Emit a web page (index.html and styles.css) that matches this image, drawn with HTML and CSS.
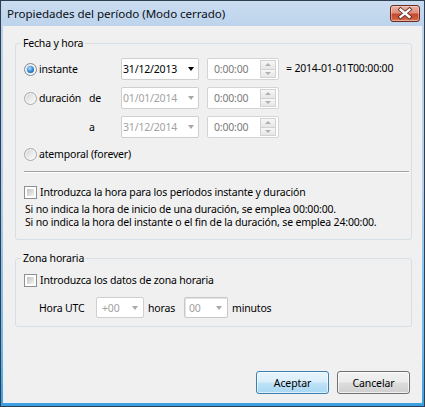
FILE: index.html
```html
<!DOCTYPE html>
<html lang="es">
<head>
<meta charset="utf-8">
<title>Propiedades del período</title>
<link rel="stylesheet" href="styles.css">
</head>
<body>
<div class="window">
  <div class="titlebar">
    <span class="title">Propiedades del período (Modo cerrado)</span>
    <span class="close">
      <svg width="28" height="15" viewBox="0 0 28 15">
        <path d="M9.5 3.5 L18.5 11 M18.5 3.5 L9.5 11" stroke="#5a2a22" stroke-width="4" stroke-linecap="square" fill="none"/>
        <path d="M9.5 3.5 L18.5 11 M18.5 3.5 L9.5 11" stroke="#ffffff" stroke-width="2.3" stroke-linecap="square" fill="none"/>
      </svg>
    </span>
  </div>
  <div class="client">
    <fieldset class="group g1">
      <legend>Fecha y hora</legend>
      <div class="grid">
        <label class="opt"><span class="radio checked"></span>instante</label>
        <span class="cell"></span>
        <div class="combo"><span>31/12/2013</span><i class="arrow"></i></div>
        <div class="spin"><span>0:00:00</span><span class="spinbtns"><b class="up"></b><b class="down"></b></span></div>
        <span class="iso">= 2014-01-01T00:00:00</span>

        <label class="opt"><span class="radio"></span>duración</label>
        <span class="cell">de</span>
        <div class="combo disabled"><span>01/01/2014</span><i class="arrow"></i></div>
        <div class="spin"><span>0:00:00</span><span class="spinbtns"><b class="up"></b><b class="down"></b></span></div>
        <span class="cell"></span>

        <span class="cell"></span>
        <span class="cell">a</span>
        <div class="combo disabled"><span>31/12/2014</span><i class="arrow"></i></div>
        <div class="spin"><span>0:00:00</span><span class="spinbtns"><b class="up"></b><b class="down"></b></span></div>
        <span class="cell"></span>
      </div>
      <label class="opt atemp"><span class="radio"></span>atemporal (forever)</label>
      <div class="sep"></div>
      <label class="chk"><span class="checkbox"></span>Introduzca la hora para los períodos instante y duración</label>
      <p class="note">Si no indica la hora de inicio de una duración, se emplea 00:00:00.<br>Si no indica la hora del instante o el fin de la duración, se emplea 24:00:00.</p>
    </fieldset>
    <fieldset class="group g2">
      <legend>Zona horaria</legend>
      <label class="chk"><span class="checkbox"></span>Introduzca los datos de zona horaria</label>
      <div class="utc">
        <span class="utc-label">Hora UTC</span>
        <div class="combo disabled small w48"><span>+00</span><i class="arrow"></i></div>
        <span class="utc-horas">horas</span>
        <div class="combo disabled small w44 inset"><span>00</span><i class="arrow"></i></div>
        <span class="utc-min">minutos</span>
      </div>
    </fieldset>
    <div class="buttons">
      <button class="btn default">Aceptar</button>
      <button class="btn">Cancelar</button>
    </div>
  </div>
</div>
</body>
</html>
```
FILE: styles.css
```css
html, body {
  margin: 0;
  padding: 0;
  background: #ffffff;
}
body {
  font-family: "Noto Sans", "Open Sans", sans-serif;
  font-size: 10.5px;
  letter-spacing: -0.18px;
  color: #000;
}
.window {
  width: 425px;
  height: 407px;
  box-sizing: border-box;
  border: 1px solid #2e3f52;
  background: linear-gradient(to bottom, #c6d9ee 0px, #bcd3ec 26px, #b0d0ee 45%, #6cb7ea 85%, #3ba0e3 100%);
  padding: 0 2px 3px 2px;
  display: flex;
  flex-direction: column;
}
.titlebar {
  height: 25px;
  flex: none;
  display: flex;
  align-items: flex-start;
  padding-left: 4px;
  padding-right: 2px;
  background: linear-gradient(to bottom, #cadcf0, #bdd4ec);
}
.title {
  font-size: 11.6px;
  letter-spacing: -0.05px;
  line-height: 15px;
  margin-top: 5px;
  color: #0b0f15;
}
.close {
  margin-left: auto;
  margin-top: 4px;
  width: 30px;
  height: 17px;
  box-sizing: border-box;
  border: 1px solid #6b2b20;
  border-radius: 3px;
  background: linear-gradient(to bottom, #eab0a2 0%, #dd8f7c 45%, #c8492f 55%, #cf5b3f 85%, #e08566 100%);
  box-shadow: inset 0 0 0 1px rgba(255,255,255,0.35);
  display: flex;
  align-items: center;
  justify-content: center;
}
.close svg { display: block; }
.client {
  flex: 1;
  background: #f0f0f0;
  display: flex;
  flex-direction: column;
  padding-top: 10px;
}
.group {
  margin: 0 10px 0 12px;
  width: 397px;
  box-sizing: border-box;
  border: 1px solid #d5dfe5;
  border-radius: 3px;
  padding: 8px 2px 10px 8px;
  min-width: 0;
}
.group legend {
  padding: 0 2px;
  margin-left: -3px;
  line-height: 14px;
  height: 14px;
}
.g2 {
  margin-top: 11px;
  padding-bottom: 8px;
}
.grid {
  display: grid;
  grid-template-columns: 65px 32px 86px 79px auto;
  grid-auto-rows: 22px;
  row-gap: 7px;
  align-items: center;
}
.cell {
  line-height: 14px;
}
.opt, .chk {
  display: flex;
  align-items: center;
  line-height: 15px;
  height: 15px;
}
.radio {
  width: 13px;
  height: 13px;
  box-sizing: border-box;
  border-radius: 50%;
  border: 1px solid #a6a8ab;
  background: linear-gradient(135deg, #cfd1d3 0%, #ececec 55%, #fafafa 100%);
  box-shadow: inset 0 0 0 1px #f6f6f6;
  margin-right: 2px;
  flex: none;
  display: flex;
  align-items: center;
  justify-content: center;
}
.radio.checked {
  border-color: #7a8a9a;
}
.radio.checked::after {
  content: "";
  width: 7px;
  height: 7px;
  border-radius: 50%;
  background: radial-gradient(circle at 40% 35%, #b7e2ff 0%, #3c93dc 45%, #123f78 100%);
}
.checkbox {
  width: 13px;
  height: 13px;
  box-sizing: border-box;
  border: 1px solid #8e8f8f;
  padding: 2px;
  background: linear-gradient(135deg, #c0c4c8, #f2f2f2) content-box, #fff;
  margin-right: 3px;
  flex: none;
}
.combo {
  width: 78px;
  height: 22px;
  box-sizing: border-box;
  border: 1px solid #cfcfcf;
  border-radius: 2px;
  background: #fff;
  display: flex;
  align-items: center;
  padding: 0 4px 0 1px;
  line-height: 14px;
}
.combo span { flex: 1; }
.arrow {
  width: 0;
  height: 0;
  border-left: 3.5px solid transparent;
  border-right: 3.5px solid transparent;
  border-top: 4px solid #000;
}
.combo.disabled span { color: #a2a2a2; }
.combo.disabled .arrow { border-top-color: #a8a8a8; }
.spin {
  width: 72px;
  height: 22px;
  box-sizing: border-box;
  border: 1px solid #d4d4d4;
  border-radius: 2px;
  background: #fff;
  display: flex;
  align-items: center;
  padding: 0 2px 0 6px;
  color: #7a7a7a;
  line-height: 14px;
}
.spin > span:first-child { flex: 1; }
.spinbtns {
  width: 16px;
  height: 18px;
  display: flex;
  flex-direction: column;
}
.spinbtns b {
  flex: 1;
  box-sizing: border-box;
  border: 1px solid #d2d2d2;
  background: linear-gradient(to bottom, #f7f7f7, #e6e6e6);
  display: flex;
  align-items: center;
  justify-content: center;
}
.spinbtns b + b { border-top: none; }
.spinbtns b::after {
  content: "";
  width: 0;
  height: 0;
  border-left: 3px solid transparent;
  border-right: 3px solid transparent;
}
.spinbtns .up::after { border-bottom: 3px solid #b0b0b0; }
.spinbtns .down::after { border-top: 3px solid #b0b0b0; }
.iso {
  line-height: 14px;
  margin-top: -2px;
}
.atemp {
  margin-top: 8px;
  height: 16px;
}
.sep {
  margin-top: 9px;
  border-top: 1px solid #a0a0a0;
  border-bottom: 1px solid #ffffff;
}
.g1 .chk {
  margin-top: 12px;
}
.note {
  margin: 3px 0 0 1px;
  line-height: 13px;
}
.utc {
  margin-top: 9px;
  height: 21px;
  display: flex;
  align-items: center;
  padding-left: 15px;
}
.utc-label { width: 57px; }
.utc-horas { width: 36px; margin-left: 4px; }
.utc-min { margin-left: 4px; }
.combo.small { height: 21px; }
.combo.w48 { width: 48px; padding-left: 5px; padding-right: 5px; }
.combo.w44 { width: 44px; padding-left: 4px; padding-right: 5px; }
.combo.inset { border-color: #c8c8c8; box-shadow: inset 1px 1px 0 #e4e4e4; }
.buttons {
  margin-top: auto;
  margin-bottom: 9px;
  display: flex;
  justify-content: flex-end;
  gap: 8px;
  padding-right: 12px;
}
.btn {
  width: 73px;
  height: 23px;
  box-sizing: border-box;
  font-family: inherit;
  font-size: 10.5px;
  letter-spacing: -0.1px;
  color: #000;
  border: 1px solid #707070;
  border-radius: 3px;
  background: linear-gradient(to bottom, #f2f2f2 0%, #ebebeb 48%, #dddddd 52%, #cfcfcf 100%);
  box-shadow: inset 0 0 0 1px rgba(255,255,255,0.7);
  padding: 0;
  margin: 0;
  line-height: 14px;
}
.btn.default {
  border-color: #3c7fb1;
  background: linear-gradient(to bottom, #e9f5fc 0%, #d9eefa 48%, #bfe3f8 52%, #a9d7f2 100%);
  box-shadow: inset 0 0 0 1px rgba(255,255,255,0.6);
}
```
